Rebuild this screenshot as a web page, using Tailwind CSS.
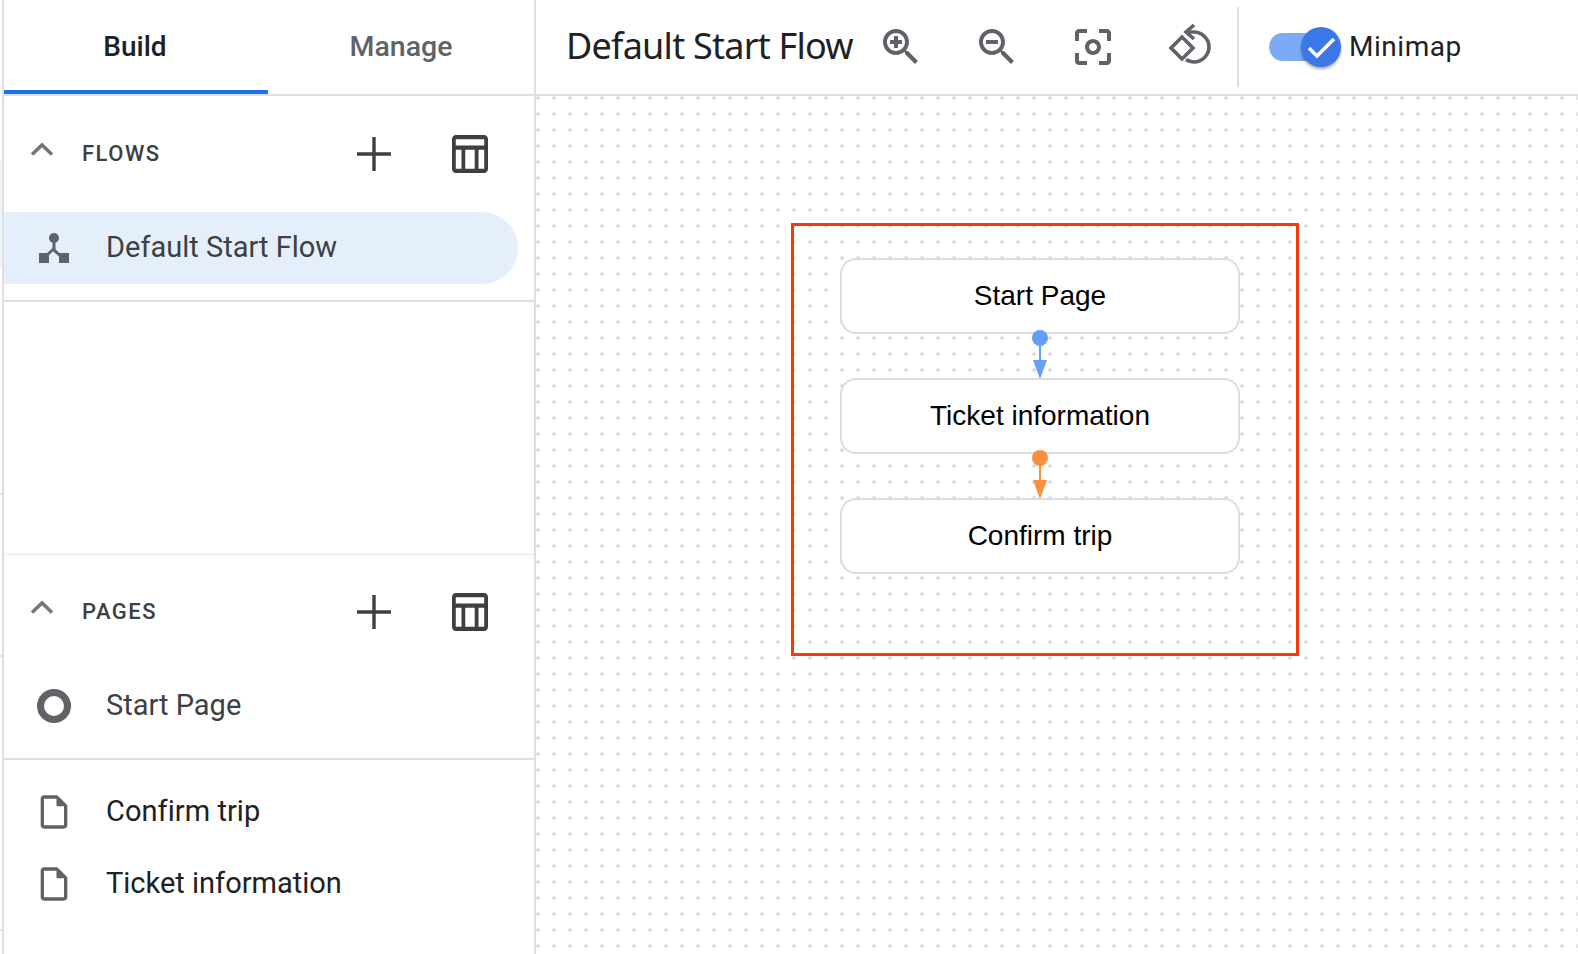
<!DOCTYPE html>
<html lang="en">
<head>
    <meta charset="utf-8">
    <title>Default Start Flow</title>
    <script src="https://cdn.jsdelivr.net/npm/@tailwindcss/browser@4"></script>
</head>
<body class="bg-white overflow-hidden font-['Roboto',sans-serif]">
<div class="flex h-[954px] w-[1578px]">

    <!-- Left gutter, the edge of whatever sits behind the panel -->
    <div class="w-[2px] shrink-0 flex flex-col bg-white">
        <div class="h-[160px]"></div>
        <div class="h-[107px] bg-[#eef4fd]"></div>
        <div class="h-[228px] border-b-2 border-[#e3e3e6]"></div>
        <div class="h-[162px] border-b-2 border-[#e3e3e6]"></div>
        <div class="h-[274px] border-b-2 border-[#e3e3e6]"></div>
    </div>

    <!-- Sidebar -->
    <aside class="w-[534px] shrink-0 flex flex-col border-x-2 border-[#dfdfe2] bg-white">
        <div class="h-[96px] flex border-b-2 border-[#dfdfe2]">
            <div class="w-[264px] h-[94px] pt-[4px] pr-[2px] flex items-center justify-center border-b-4 border-[#1a73e8] text-[28px] font-medium text-[#202124]">Build</div>
            <div class="flex-1 h-[94px] flex items-center justify-center text-[28.500px] font-medium text-[#5f6368]">Manage</div>
        </div>

        <!-- Flows -->
        <div class="h-[116px] flex items-center pl-[26px]">
            <svg class="w-[24px] h-[14px] -mt-[10px]" viewBox="0 0 24 14"><path d="M2 12.5 12 3l10 9.5" fill="none" stroke="#757575" stroke-width="3.5"/></svg>
            <span class="ml-[28px] -mt-[2px] text-[22px] font-medium tracking-[1.500px] text-[#3c4043]">FLOWS</span>
            <div class="ml-auto flex items-center gap-[61px] pr-[46px]">
                <svg class="w-[34px] h-[34px]" viewBox="0 0 34 34"><path d="M15.3 0h3.400v15.300H34v3.400H18.700V34h-3.400V18.700H0v-3.400h15.300z" fill="#3c4043"/></svg>
                <svg class="w-[36px] h-[38px]" viewBox="3 3 19 18" preserveAspectRatio="none"><path d="M20 3H5c-1.100 0-2 .9-2 2v14c0 1.100.9 2 2 2h15c1.100 0 2-.9 2-2V5c0-1.100-.9-2-2-2zm0 2v3H5V5h15zm-5 14h-5v-9h5v9zM5 10h3v9H5v-9zm12 9v-9h3v9h-3z" fill="#3c4043"/></svg>
            </div>
        </div>
        <div class="h-[72px] w-[514px] flex items-center rounded-r-[36px] bg-[#e5effc]">
            <svg class="ml-[34px] w-[32px] h-[32px]" viewBox="0 0 32 32" fill="#5f6368"><circle cx="16" cy="6" r="5"/><path d="M14.500 9h3v8.500l7 6-2 2.200-7-6-.5-.5-6.500 6.500-2-2.200 8-7.500z"/><rect x="1" y="21" width="10" height="10"/><rect x="21" y="21" width="10" height="10"/></svg>
            <span class="ml-[36px] text-[29px] text-[#3c4043]">Default Start Flow</span>
        </div>
        <div class="h-[18px] border-b-2 border-[#dfdfe2]"></div>

        <div class="h-[252px] border-b border-[#f1f1f1] shadow-[0_2px_3px_rgba(0,0,0,.05)]"></div>

        <!-- Pages -->
        <div class="h-[116px] flex items-center pl-[26px]">
            <svg class="w-[24px] h-[14px] -mt-[10px]" viewBox="0 0 24 14"><path d="M2 12.5 12 3l10 9.500" fill="none" stroke="#757575" stroke-width="3.5"/></svg>
            <span class="ml-[28px] -mt-[2px] text-[22px] font-medium tracking-[1.500px] text-[#3c4043]">PAGES</span>
            <div class="ml-auto flex items-center gap-[61px] pr-[46px]">
                <svg class="w-[34px] h-[34px]" viewBox="0 0 34 34"><path d="M15.3 0h3.400v15.300H34v3.400H18.700V34h-3.400V18.700H0v-3.400h15.300z" fill="#3c4043"/></svg>
                <svg class="w-[36px] h-[38px]" viewBox="3 3 19 18" preserveAspectRatio="none"><path d="M20 3H5c-1.100 0-2 .9-2 2v14c0 1.100.9 2 2 2h15c1.100 0 2-.9 2-2V5c0-1.100-.9-2-2-2zm0 2v3H5V5h15zm-5 14h-5v-9h5v9zM5 10h3v9H5v-9zm12 9v-9h3v9h-3z" fill="#3c4043"/></svg>
            </div>
        </div>
        <div class="h-[72px] flex items-center">
            <div class="ml-[33px] w-[34px] h-[34px] rounded-full border-[7px] border-[#5f6368]"></div>
            <span class="ml-[35px] text-[29px] text-[#3c4043]">Start Page</span>
        </div>
        <div class="h-[18px] border-b-2 border-[#dfdfe2]"></div>
        <div class="h-[16px]"></div>
        <div class="h-[72px] flex items-center">
            <svg class="ml-[30px] w-[40px] h-[40px]" viewBox="0 0 24 24" fill="#5f6368"><path d="M14 2H6c-1.100 0-2 .9-2 2v16c0 1.100.9 2 2 2h12c1.100 0 2-.9 2-2V8l-6-6zM6 20V4h7.500v4.500H18V20H6z"/></svg>
            <span class="ml-[32px] text-[29px] tracking-[.05px] text-[#202124]">Confirm trip</span>
        </div>
        <div class="h-[72px] flex items-center">
            <svg class="ml-[30px] w-[40px] h-[40px]" viewBox="0 0 24 24" fill="#5f6368"><path d="M14 2H6c-1.100 0-2 .9-2 2v16c0 1.100.9 2 2 2h12c1.100 0 2-.9 2-2V8l-6-6zM6 20V4h7.500v4.500H18V20H6z"/></svg>
            <span class="ml-[32px] text-[29px] text-[#202124]">Ticket information</span>
        </div>
    </aside>

    <!-- Main -->
    <main class="flex-1 flex flex-col min-w-0">
        <div class="h-[96px] shrink-0 flex items-center pl-[30px] border-b-2 border-[#dfdfe2]">
            <h1 class="w-[315px] -mt-[2px] text-[36px] text-[#202124] font-['Noto_Sans',sans-serif] tracking-[-.76px]">Default Start Flow</h1>
            <svg class="-ml-[4px] w-[48px] h-[48px]" viewBox="0 0 24 24" fill="#5f6368"><path d="M15.500 14h-.79l-.28-.27C15.410 12.590 16 11.110 16 9.500 16 5.910 13.090 3 9.500 3S3 5.910 3 9.500 5.910 16 9.500 16c1.610 0 3.090-.59 4.230-1.570l.27.28v.79l5 4.990L20.490 19l-4.990-5zm-6 0C7.010 14 5 11.990 5 9.500S7.010 5 9.500 5 14 7.010 14 9.500 11.990 14 9.500 14z"/><path d="M12.500 10.500h-2v2h-2v-2h-2v-2h2v-2h2v2h2z"/></svg>
            <svg class="ml-[48px] w-[48px] h-[48px]" viewBox="0 0 24 24" fill="#5f6368"><path d="M15.500 14h-.79l-.28-.27C15.410 12.590 16 11.110 16 9.500 16 5.910 13.090 3 9.500 3S3 5.910 3 9.500 5.910 16 9.500 16c1.610 0 3.090-.59 4.230-1.570l.27.28v.79l5 4.990L20.490 19l-4.990-5zm-6 0C7.010 14 5 11.990 5 9.500S7.010 5 9.500 5 14 7.010 14 9.500 11.990 14 9.500 14z"/><path d="M6.500 8.500h6v2h-6z"/></svg>
            <svg class="ml-[48px] w-[48px] h-[48px]" viewBox="0 0 24 24" fill="#5f6368"><path d="M5 15H3v4c0 1.100.9 2 2 2h4v-2H5v-4zM5 5h4V3H5c-1.100 0-2 .9-2 2v4h2V5zm14-2h-4v2h4v4h2V5c0-1.100-.9-2-2-2zm0 16h-4v2h4c1.100 0 2-.9 2-2v-4h-2v4zM12 8c-2.210 0-4 1.790-4 4s1.790 4 4 4 4-1.790 4-4-1.790-4-4-4zm0 6c-1.100 0-2-.9-2-2s.9-2 2-2 2 .9 2 2-.9 2-2 2z"/></svg>
            <svg class="ml-[48px] w-[48px] h-[48px]" viewBox="0 0 48 48" fill="none" stroke="#5f6368" stroke-width="3.6"><path d="M17 14 28 25 17 36 6 25z"/><path d="M22 9h7c8 0 15 7 15 15s-7 15-15 15c-3 0-6-1-8-2.500"/><path d="M29 2l-8 7 8 7"/></svg>
            <div class="ml-[24px] h-[80px] w-[2px] bg-[#dfdfe2]"></div>

            <!-- Toggle -->
            <div class="relative ml-[30px] h-[28px] w-[56px] rounded-full bg-[#7baaf7]">
                <div class="absolute -top-[6px] left-[32px] w-[40px] h-[40px] rounded-full bg-[#3b78e7] shadow-[0_2px_3px_rgba(0,0,0,.35)] flex items-center justify-center">
                    <svg class="w-[30px] h-[30px]" viewBox="0 0 30 30"><path d="M3 16l8 8L28 7" fill="none" stroke="#fff" stroke-width="3.600"/></svg>
                </div>
            </div>
            <span class="ml-[24px] text-[28px] tracking-[.55px] text-[#202124]">Minimap</span>
        </div>

        <!-- Canvas -->
        <div class="relative flex-1 bg-white bg-[radial-gradient(circle,#dcdce2_1.7px,transparent_2px)] bg-[size:16px_16px] bg-[position:10px_-6px]">
            <div class="absolute left-[255px] top-[127px] w-[508px] h-[433px] border-[3px] border-[#f8390f]"></div>

            <div class="absolute left-[304px] top-[162px] w-[400px] h-[76px] rounded-[16px] border-2 border-[#dcdce2] bg-white flex items-center justify-center text-[28px] text-black font-['Liberation_Sans',sans-serif]">Start Page</div>
            <div class="absolute left-[304px] top-[282px] w-[400px] h-[76px] rounded-[16px] border-2 border-[#dcdce2] bg-white flex items-center justify-center text-[28px] text-black font-['Liberation_Sans',sans-serif]">Ticket information</div>
            <div class="absolute left-[304px] top-[402px] w-[400px] h-[76px] rounded-[16px] border-2 border-[#dcdce2] bg-white flex items-center justify-center text-[28px] text-black font-['Liberation_Sans',sans-serif]">Confirm trip</div>

            <svg class="absolute left-[494px] top-[234px] w-[20px] h-[49px]" viewBox="0 0 20 49"><circle cx="10" cy="8" r="8" fill="#669df6"/><path d="M9 14h2v18H9z" fill="#669df6"/><path d="M3 30h14l-7 19z" fill="#669df6"/></svg>
            <svg class="absolute left-[494px] top-[354px] w-[20px] h-[49px]" viewBox="0 0 20 49"><circle cx="10" cy="8" r="8" fill="#fa903e"/><path d="M9 14h2v18H9z" fill="#fa903e"/><path d="M3 30h14l-7 19z" fill="#fa903e"/></svg>
        </div>
    </main>
</div>
</body>
</html>
